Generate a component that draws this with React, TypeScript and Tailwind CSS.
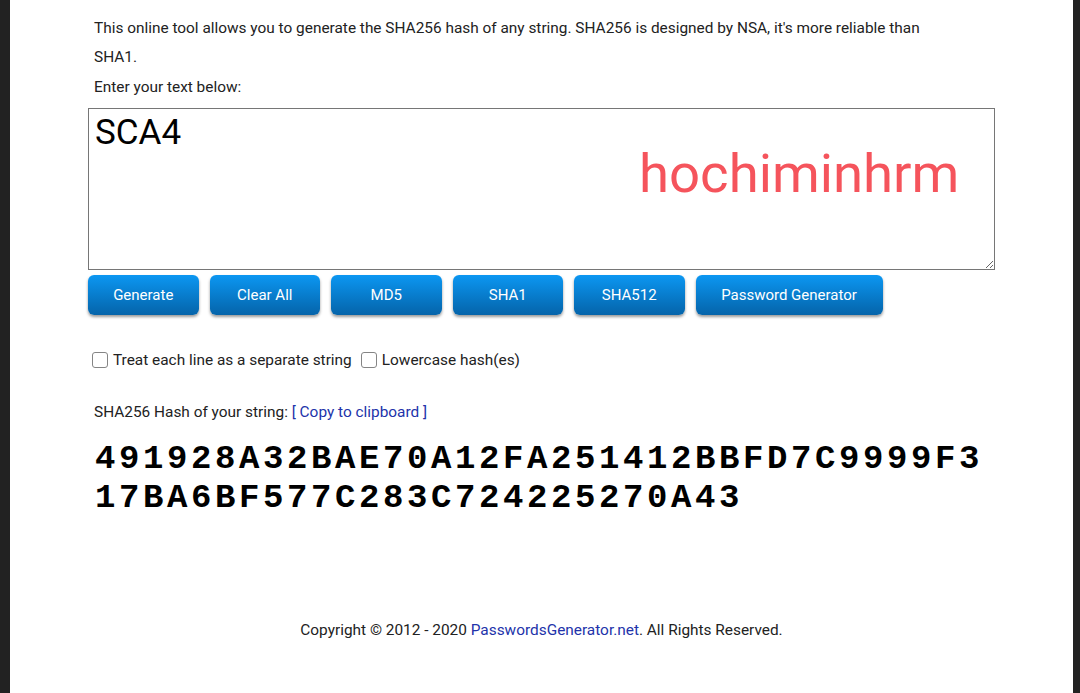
import React from 'react';

const buttons = ['Generate', 'Clear All', 'MD5', 'SHA1', 'SHA512', 'Password Generator'];

const Check: React.FC<{ label: string }> = ({ label }) => (
  <label className="flex items-end gap-[5px]">
    <span className="w-4 h-4 rounded-[3px] border border-[#858585] bg-white mb-[1px]" />
    <span>{label}</span>
  </label>
);

export default function App() {
  return (
    <div className="flex w-[1080px] h-[693px] bg-[#222222] overflow-hidden" style={{ fontFamily: 'Roboto, "Liberation Sans", sans-serif' }}>
      <div className="w-[10px] shrink-0" />
      <main className="flex-1 bg-white text-[15.4px] text-[#222] flex flex-col">
        <div className="pl-[78px] pr-[75px] pt-[14px]">
          <p className="leading-[29px] pl-[6px] w-[850px]">
            This online tool allows you to generate the SHA256 hash of any string. SHA256 is designed by NSA, it's more reliable than SHA1.
          </p>
          <p className="leading-[29px] pl-[6px] mt-px">Enter your text below:</p>

          {/* Input area */}
          <div className="relative mt-[6px]">
            <textarea
              defaultValue="SCA4"
              className="block w-[907px] h-[162px] border border-[#767676] px-[6px] py-[2px] text-[35px] leading-[44px] text-black outline-none"
              style={{ fontFamily: 'Roboto, "Liberation Sans", sans-serif' }}
            />
            <span className="absolute left-[551px] top-[30px] text-[54.5px] leading-[70px] text-[#f5545c] pointer-events-none">
              hochiminhrm
            </span>
          </div>

          {/* Action buttons */}
          <div className="flex gap-[11px] mt-[5px]">
            {buttons.map((b) => (
              <button
                key={b}
                className={`h-10 rounded-[6px] text-white text-[15px] bg-gradient-to-b from-[#0c97f2] to-[#0564aa] shadow-[0_2px_3px_rgba(0,0,0,0.4)] ${b === 'Password Generator' ? 'w-[187px]' : 'w-[110.5px]'}`}
              >
                {b}
              </button>
            ))}
          </div>

          {/* Options */}
          <div className="flex gap-[9px] mt-[36px] pl-[4px] leading-[18px]">
            <Check label="Treat each line as a separate string" />
            <Check label="Lowercase hash(es)" />
          </div>

          <p className="pl-[6px] mt-[33px] leading-[20px]">
            SHA256 Hash of your string: <a className="text-[#2233aa]">[ Copy to clipboard ]</a>
          </p>

          <div
            className="pl-[7px] mt-[18px] text-[34px] leading-[39px] tracking-[3.6px] font-bold text-black w-[910px]"
            style={{ fontFamily: '"Liberation Mono", "Courier New", monospace' }}
          >
            <div>491928A32BAE70A12FA251412BBFD7C9999F3</div>
            <div>17BA6BF577C283C724225270A43</div>
          </div>
        </div>

        <footer className="mt-auto mb-[53px] text-center leading-[20px]">
          Copyright © 2012 - 2020 <a className="text-[#2233aa]">PasswordsGenerator.net</a>. All Rights Reserved.
        </footer>
      </main>
      <div className="w-[10px] shrink-0" />
    </div>
  );
}
